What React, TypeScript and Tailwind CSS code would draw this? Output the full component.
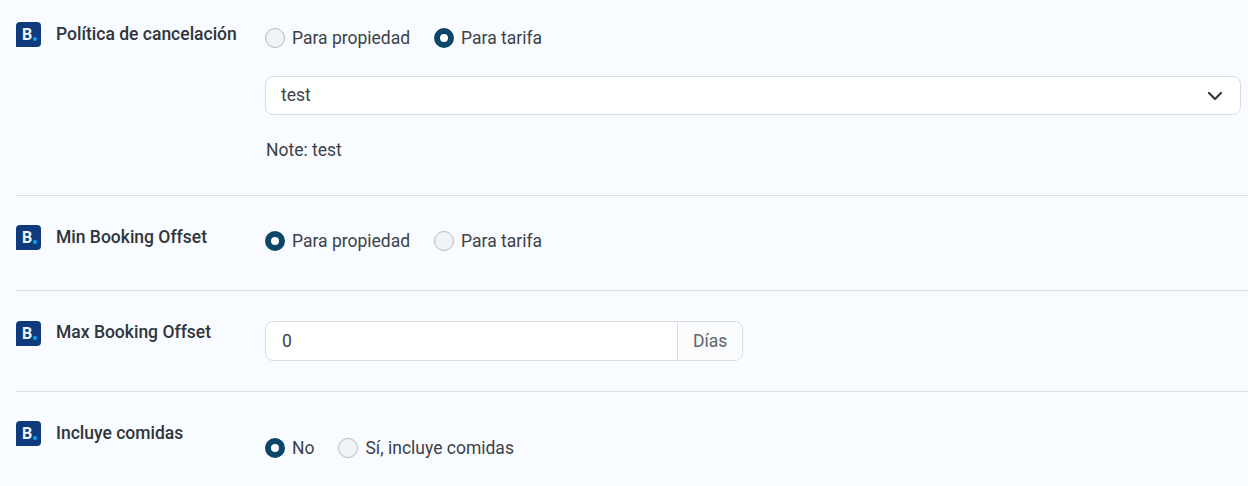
const font = "font-['Roboto',sans-serif]";

function BookingLogo() {
  return (
    <div className="flex h-[25px] w-[25px] shrink-0 items-center rounded-[4px] rounded-bl-none bg-[#0f3b7d] pl-[6px] text-[16px] leading-none font-bold text-[#f2f6fb]">
      B<span className="mt-[9px] ml-[1px] h-[4px] w-[4px] rounded-full bg-[#00a8f5]" />
    </div>
  );
}

function Radio({ label, checked }: { label: string; checked?: boolean }) {
  return (
    <label className="flex items-center gap-[7px]">
      {checked ? (
        <span className="h-5 w-5 rounded-full border-[6px] border-[#0b4568] bg-white" />
      ) : (
        <span className="h-5 w-5 rounded-full border border-[#b4babf] bg-[#f0f3f6]" />
      )}
      <span className="text-[17.5px] leading-[24px] text-[#3c4248]">{label}</span>
    </label>
  );
}

function Label({ children, raised }: { children: string; raised?: boolean }) {
  return (
    <div className="mt-[2px] flex w-[249px] shrink-0 items-start gap-[15px]">
      <BookingLogo />
      <span className={raised ? "-mt-[1px] text-[17.5px] leading-[24px] font-medium text-[#2f353b]" : "text-[17.5px] leading-[24px] font-medium text-[#2f353b]"}>
        {children}
      </span>
    </div>
  );
}

export default function App() {
  return (
    <div className={`${font} h-[486px] w-[1248px] overflow-hidden bg-[#f8fbff] pl-4`}>
      {/* Cancelacion */}
      <div className="flex h-[196px] border-b border-[#dcdfe2] pt-5">
        <Label>Política de cancelación</Label>
        <div className="flex-1 pr-[7px]">
          <div className="mt-[6px] flex gap-6">
            <Radio label="Para propiedad" />
            <Radio label="Para tarifa" checked />
          </div>
          <div className="mt-[26px] flex h-[39px] items-center justify-between rounded-[8px] border border-[#d9dce0] bg-white pr-[17px] pl-[15px] text-[17.5px] text-[#3c4248]">
            <span>test</span>
            <svg width="16" height="10" viewBox="0 0 16 10" fill="none" stroke="#343a40" strokeWidth="2.2" strokeLinecap="round" strokeLinejoin="round">
              <path d="M2 2l6 6 6-6" />
            </svg>
          </div>
          <p className="mt-[23px] pl-[1px] text-[17.5px] leading-[24px] text-[#3c4248]">Note: test</p>
        </div>
      </div>

      {/* Min offset */}
      <div className="flex h-[95px] border-b border-[#dcdfe2] pt-[27px]">
        <Label>Min Booking Offset</Label>
        <div className="mt-[6px] flex gap-6 self-start">
          <Radio label="Para propiedad" checked />
          <Radio label="Para tarifa" />
        </div>
      </div>

      {/* Max offset */}
      <div className="flex h-[101px] border-b border-[#dcdfe2] pt-[28px]">
        <Label raised>Max Booking Offset</Label>
        <div className="mt-[2px] flex h-[39.5px] w-[478px] self-start rounded-[8px] border border-[#d9dce0] bg-white text-[17.5px] text-[#3c4248]">
          <span className="flex flex-1 items-center pl-4">0</span>
          <span className="flex w-[65px] items-center rounded-r-[8px] border-l border-[#d9dce0] bg-[#fafbfd] pl-[15px] text-[#5c6670]">Días</span>
        </div>
      </div>

      {/* Comidas */}
      <div className="flex pt-[27px]">
        <Label>Incluye comidas</Label>
        <div className="mt-[17px] flex gap-6 self-start">
          <Radio label="No" checked />
          <Radio label="Sí, incluye comidas" />
        </div>
      </div>
    </div>
  );
}
